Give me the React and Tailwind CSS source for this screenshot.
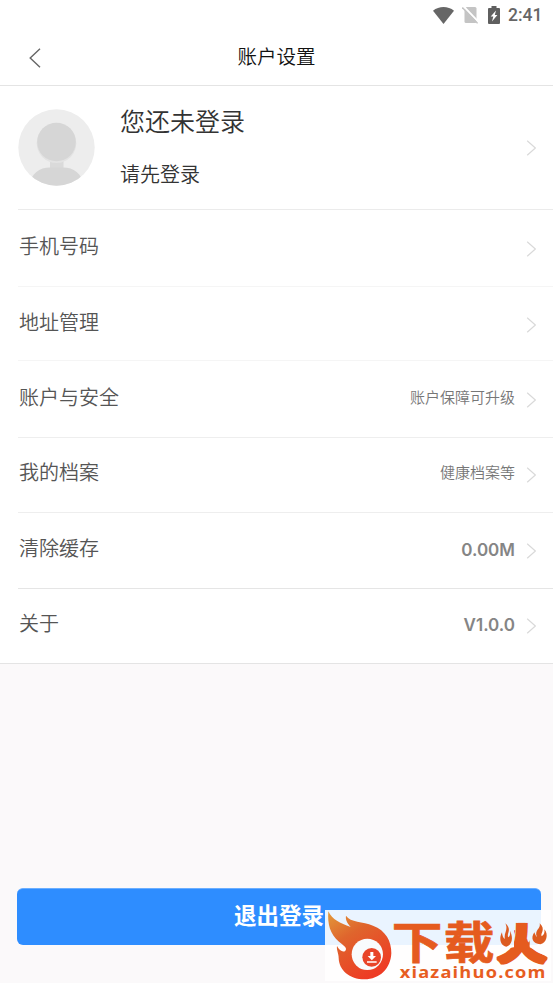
const ROWS = [
  { label: '手机号码', height: 'h-[77px]', pad: 'pt-[21px]', border: 'border-[#f5f5f5]' },
  { label: '地址管理', height: 'h-[74px]', pad: 'pt-5', border: 'border-[#f5f5f5]' },
  { label: '账户与安全', value: '账户保障可升级', height: 'h-[77px]', pad: 'pt-[21px]', border: 'border-[#eeeeee]' },
  { label: '我的档案', value: '健康档案等', height: 'h-[75px]', pad: 'pt-[19px]', border: 'border-[#eeeeee]' },
  { label: '清除缓存', value: '0.00M', latin: true, height: 'h-[76px]', pad: 'pt-5', border: 'border-[#e5e5e5]' },
  { label: '关于', value: 'V1.0.0', latin: true, height: 'h-[74px]', pad: 'pt-[19px]' },
];

function Chevron({ className = '' }) {
  return (
    <svg className={`h-4 w-[10px] shrink-0 ${className}`} viewBox="0 0 10 16" fill="none" stroke="#d9d9d9" strokeWidth="1.2">
      <path d="M1.200 .7 9.400 8 1.200 15.300" />
    </svg>
  );
}

function StatusBar() {
  return (
    <div className="flex h-[30px] items-center justify-end pr-[11px]">
      <svg className="mr-2 h-[17px] w-[21px]" viewBox="0 0 21 17" fill="#666">
        <path d="M0 3.8C6-1.2 15-1.2 21 3.8L10.5 17z" />
      </svg>
      <svg className="mr-[10px] h-[18px] w-4" viewBox="0 0 16 18">
        <path d="M4.500 1H13a1.500 1.500 0 0 1 1.500 1.500v13A1.500 1.500 0 0 1 13 17H4a1.500 1.500 0 0 1-1.500-1.500V3z" fill="#c4c4c4" />
        <path d="M1.200 0 16.400 15.800" stroke="#fff" strokeWidth="2" />
        <path d="M.3 1.5 15.6 17.3" stroke="#c4c4c4" strokeWidth="1.5" />
      </svg>
      <svg className="mr-2 h-[18px] w-3" viewBox="0 0 12 18">
        <path d="M3.5 0h5v2H11a1 1 0 0 1 1 1v14a1 1 0 0 1-1 1H1a1 1 0 0 1-1-1V3a1 1 0 0 1 1-1h2.500z" fill="#5f5f5f" />
        <path d="M8 4.500 2.700 10.500h2.600L4 15.500 9.400 9H6.800z" fill="#fff" />
      </svg>
      <span className="w-[34px] text-right font-['Roboto',sans-serif] text-[17.500px] leading-[30px] font-medium text-[#666]">2:41</span>
    </div>
  );
}

function Avatar() {
  return (
    <svg className="size-[77px] shrink-0" viewBox="0 0 77 77">
      <defs>
        <clipPath id="avatar-clip">
          <circle cx="38.500" cy="38.500" r="38.200" />
        </clipPath>
      </defs>
      <g clipPath="url(#avatar-clip)">
        <rect width="77" height="77" fill="#ededed" />
        <path d="M32 48h13.500v11H32z" fill="#dadada" />
        <path d="M10 77C14 64 21 58.500 32 58.500H45C56 58.500 63 64 67 77z" fill="#d6d6d6" />
        <circle cx="38.500" cy="34.200" r="19.800" fill="#e3e3e3" />
        <circle cx="38.500" cy="33" r="19.300" fill="#d6d6d6" />
      </g>
    </svg>
  );
}

function Watermark() {
  return (
    <div className="absolute top-[910px] left-[325px] h-[71px] w-[226px] bg-white/90">
      <svg className="h-full w-full" viewBox="36 120 678 213">
        <defs>
          <linearGradient id="flame" x1="0" y1="0" x2=".6" y2="1">
            <stop offset="0" stopColor="#e39a3a" />
            <stop offset=".4" stopColor="#df652d" />
            <stop offset="1" stopColor="#ee3b24" />
          </linearGradient>
          <linearGradient id="word" x1="0" y1="0" x2="0" y2="1">
            <stop offset="0" stopColor="#d9601f" />
            <stop offset="1" stopColor="#f05a22" />
          </linearGradient>
          {/* keeps the stem and the legs, the side strokes are flames */}
          <clipPath id="stem">
            <path d="M603 158H650V232L704 262V284H550V240L603 232z" />
          </clipPath>
        </defs>
        <path
          d="M46 124C58 150 81 159 113 171C102 158 97 149 99 137C113 158 149 154 180 167C218 181 236 214 235 250C233 296 200 328 155 328C109 328 78 300 77 264C77 250 70 240 72 228C79 241 90 249 97 242C104 233 91 226 78 215C51 193 43 162 46 124Z"
          fill="url(#flame)"
        />
        <circle cx="163" cy="253" r="47" fill="#f9fbfd" />
        <circle cx="176" cy="262" r="28" fill="#e8452a" />
        <path d="M172 246h9v12h8l-12.500 13L164 258h8zM162 274h29v4h-29z" fill="#fff" />
        <g fill="#e55b1f" stroke="#e55b1f" strokeWidth="2.500" fontWeight="700" fontFamily="'Noto Sans CJK SC', sans-serif" fontSize="152">
          <text transform="translate(0 33) scale(1 .872)" x="236" y="268">下</text>
          <text transform="translate(0 33) scale(1 .872)" x="392" y="268">载</text>
          <g clipPath="url(#stem)" strokeWidth="15">
            <text transform="translate(0 33) scale(1 .872)" x="551" y="268">火</text>
          </g>
        </g>
        <path d="M577 160C599 180 579 190 586 202C592 198 592 190 591 182C602 204 597 225 580 230C560 225 558 204 567 187C568 200 572 205 576 207C571 189 587 181 577 160Z" fill="#dc5b20" />
        <path d="M680 160C700 178 681 190 686 199C693 195 696 188 694 178C708 193 700 220 682 223C659 221 652 205 664 187C667 195 669 199 672 201C662 181 685 176 680 160Z" fill="#dc5b20" />
        <text
          x="260"
          y="323"
          textLength="441"
          lengthAdjust="spacingAndGlyphs"
          letterSpacing="3"
          fontSize="46"
          fontWeight="700"
          fontFamily="'Open Sans', sans-serif"
          fill="url(#word)"
        >
          xiazaihuo.com
        </text>
      </svg>
    </div>
  );
}

export default function App() {
  return (
    <div className="relative flex h-[983px] w-[553px] flex-col overflow-hidden bg-[#fbf9fa] font-['Noto_Sans_CJK_SC',sans-serif] font-[350]">
      <header className="h-[86px] border-b border-[#e4e4e4] bg-white">
        <StatusBar />
        <div className="grid h-[55px] grid-cols-3 items-center">
          <svg className="ml-[29px] h-5 w-3" viewBox="0 0 12 20" fill="none" stroke="#666" strokeWidth="1.4">
            <path d="M11 .7 1.200 10 11 19.300" />
          </svg>
          <h1 className="pb-[3px] text-center text-[19.500px] leading-[52px] text-[#111]">账户设置</h1>
        </div>
      </header>

      <section className="border-b border-[#e4e4e4] bg-white pl-[18px]">
        <div className="flex h-[124px] items-center border-b border-[#ebebeb] pr-[17px]">
          <Avatar />
          <div className="ml-[25px] flex h-full flex-1 flex-col pt-[15px]">
            <span className="text-[25px] leading-[38px] text-[#333]">您还未登录</span>
            <span className="mt-5 text-[20px] leading-[30px] text-[#333]">请先登录</span>
          </div>
          <Chevron />
        </div>

        {ROWS.map(row => (
          <div
            key={row.label}
            className={`flex items-start pr-[17px] ${row.height} ${row.pad} ${row.border ? `border-b ${row.border}` : ''}`}
          >
            <span className="flex-1 pl-px text-[20px] leading-[30px] text-[#555]">{row.label}</span>
            {row.value && (
              <span
                className={
                  row.latin
                    ? "mr-[11px] pt-[2px] font-['Inter',sans-serif] text-[17px] leading-[30px] font-semibold text-[#858585]"
                    : 'mr-[11px] text-[15px] leading-[30px] text-[#777]'
                }
              >
                {row.value}
              </span>
            )}
            <Chevron className="mt-[10px]" />
          </div>
        ))}
      </section>

      <button
        type="button"
        className="mt-auto mr-3 mb-[38px] ml-[17px] h-[57px] rounded-md border-t border-[#6aaeff] bg-[#2e8dff] pb-[5px] text-[22.500px] font-bold text-white"
      >
        退出登录
      </button>

      <Watermark />
    </div>
  );
}
